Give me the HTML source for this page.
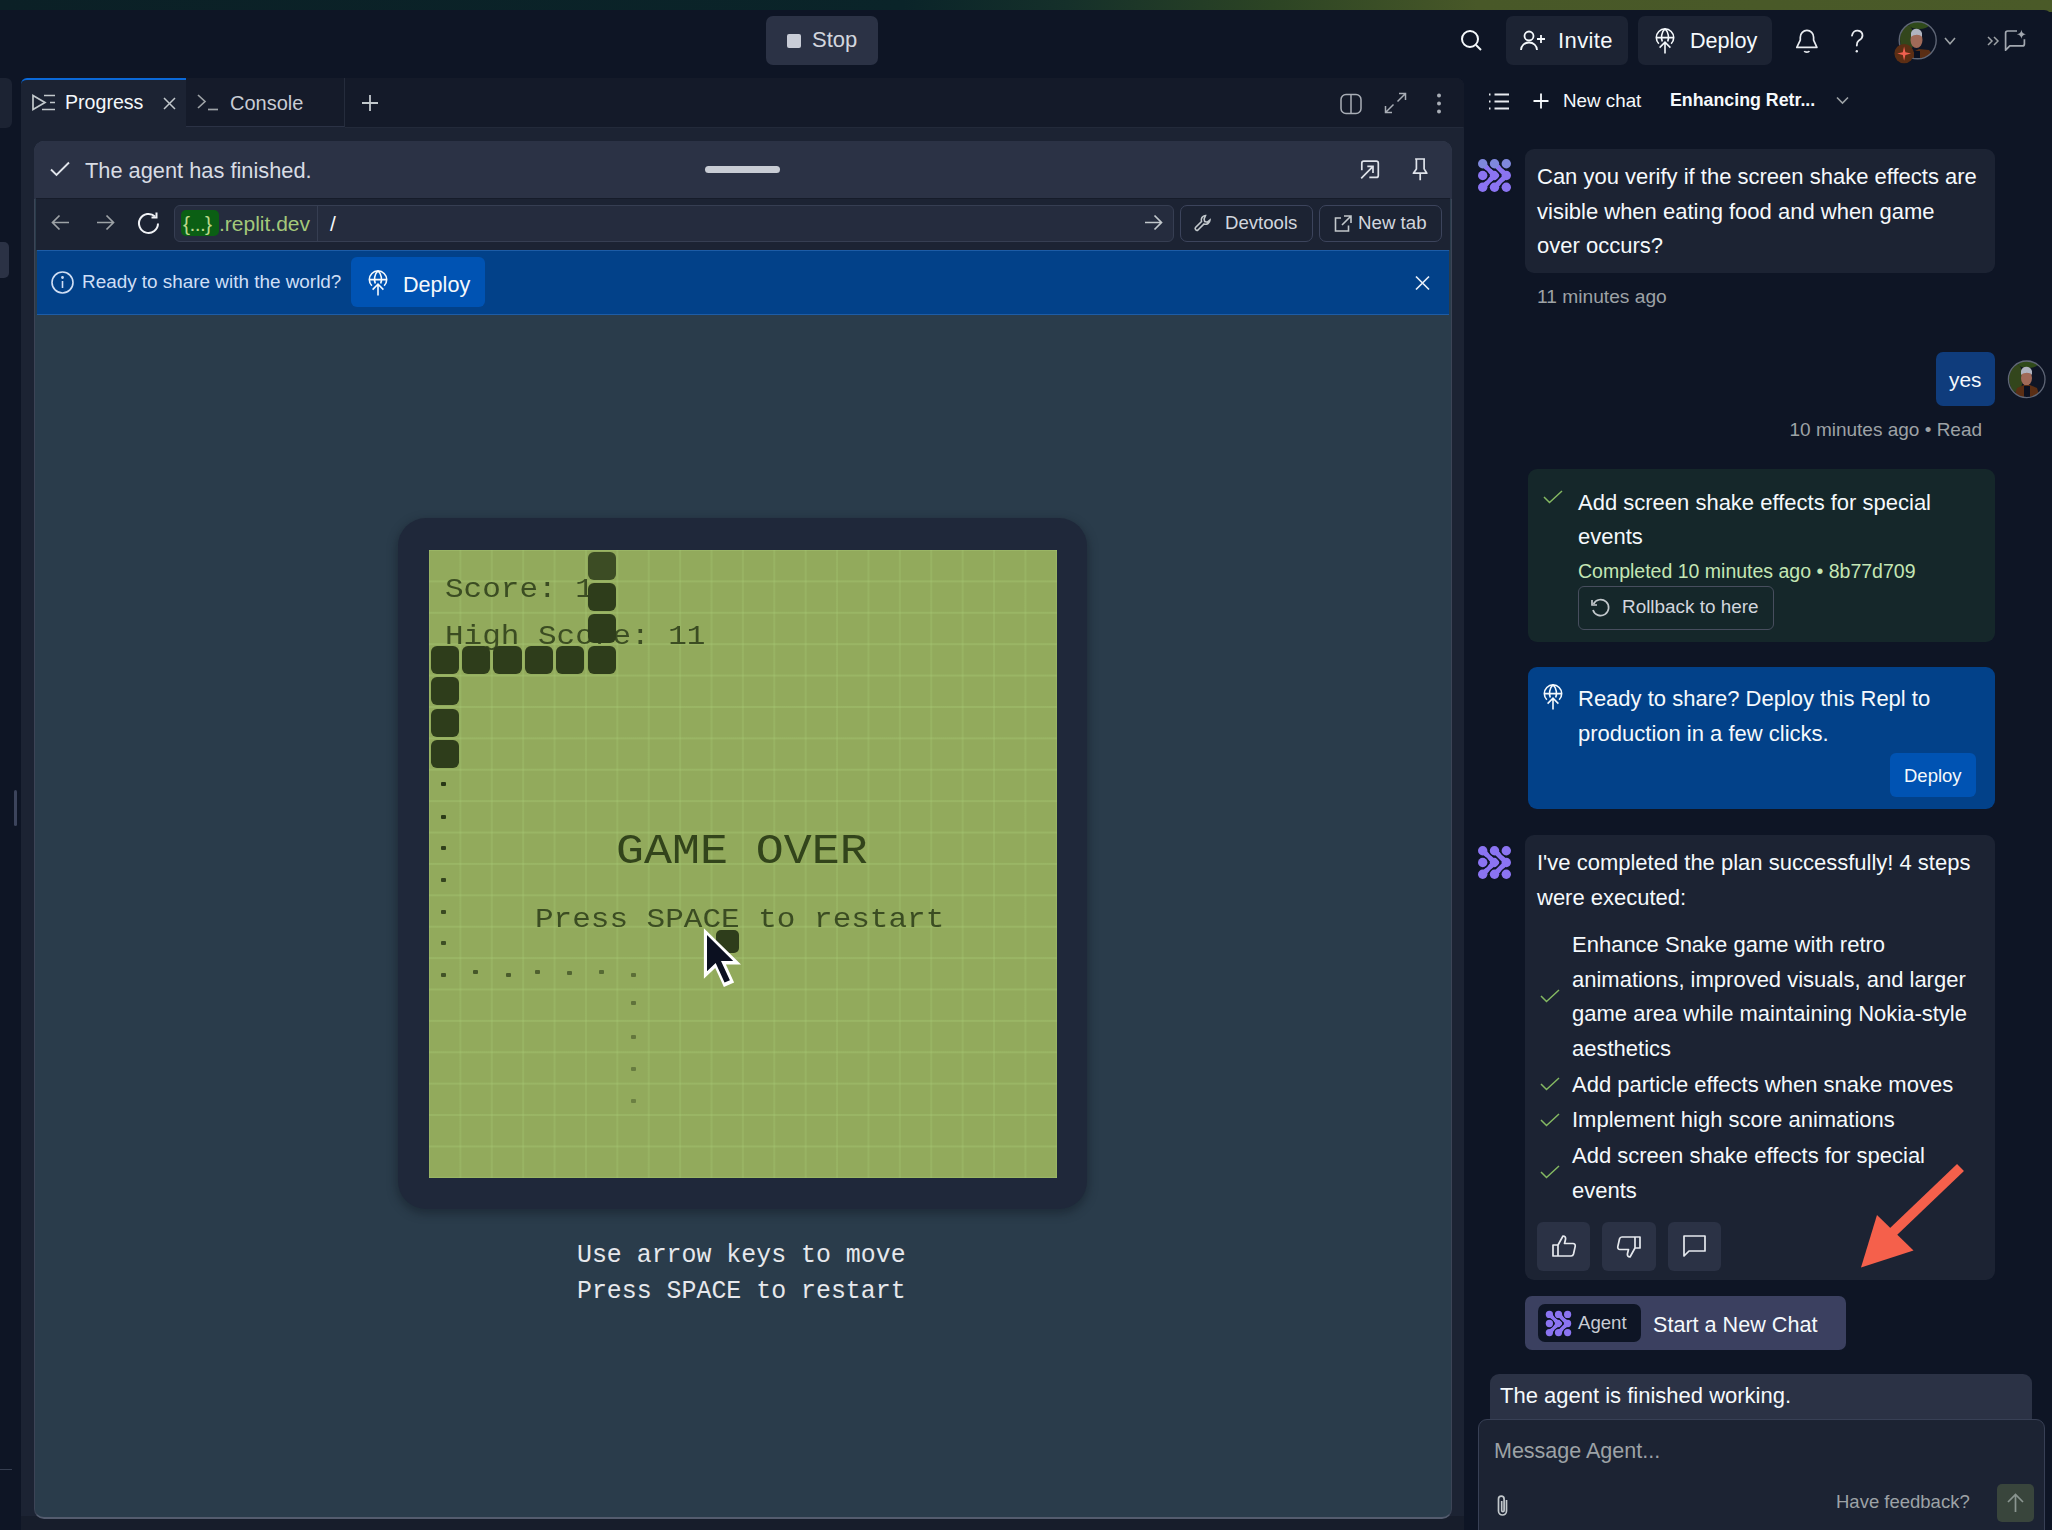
<!DOCTYPE html>
<html><head><meta charset="utf-8">
<style>
*{box-sizing:border-box;margin:0;padding:0}
html,body{width:2052px;height:1530px;overflow:hidden;background:#0e1525;font-family:"Liberation Sans",sans-serif;color:#f5f9fc}
.a{position:absolute}
.t{position:absolute;white-space:nowrap;line-height:1}
svg{position:absolute;overflow:visible}
</style></head><body>
<!-- top strip -->
<div class="a" style="left:0;top:0;width:2052px;height:12px;background:linear-gradient(90deg,#0b2026 0%,#0a2429 44%,#15302a 52%,#2c4424 62%,#485828 72%,#4a5a28 100%)"></div>
<div class="a" style="left:0;top:10px;width:2052px;height:1520px;background:#0e1525;border-top-right-radius:8px"></div>

<!-- TOP BAR -->
<div class="a" style="left:766px;top:16px;width:112px;height:49px;background:#2b3245;border-radius:7px"></div>
<div class="a" style="left:787px;top:34px;width:14px;height:14px;background:#c8ccd6;border-radius:2px"></div>
<div class="t" style="left:812px;top:29px;font-size:22px;color:#d2d6de">Stop</div>

<!-- search -->
<svg style="left:1460px;top:29px" width="24" height="24" viewBox="0 0 24 24" fill="none" stroke="#f5f9fc" stroke-width="2"><circle cx="10" cy="10" r="8"/><path d="M16 16l5 5"/></svg>
<div class="a" style="left:1506px;top:16px;width:122px;height:49px;background:#1c2333;border-radius:7px"></div>
<svg style="left:1520px;top:30px" width="26" height="21" viewBox="0 0 26 21" fill="none" stroke="#f5f9fc" stroke-width="1.8"><circle cx="9" cy="6" r="4.5"/><path d="M1 20c0-4.5 3.6-7.5 8-7.5s8 3 8 7.5"/><path d="M21 5v8M17 9h8"/></svg>
<div class="t" style="left:1558px;top:30px;font-size:22px;letter-spacing:0.4px">Invite</div>
<div class="a" style="left:1638px;top:16px;width:134px;height:49px;background:#1c2333;border-radius:7px"></div>
<svg style="left:1653px;top:28px" width="24" height="26" viewBox="0 0 24 26" fill="none" stroke="#f5f9fc" stroke-width="1.6"><path d="M5.85 15.75A8.7 8.7 0 1 1 18.15 15.75"/><path d="M3.3 9.6H20.7M12 0.9C8.3 4 7.8 10 9.3 13.5M12 0.9C15.7 4 16.2 10 14.7 13.5"/><path d="M12 25.4V14.6M6.6 19.6L12 14.2l5.4 5.4"/></svg>
<div class="t" style="left:1690px;top:30px;font-size:21.6px">Deploy</div>
<!-- bell -->
<svg style="left:1795px;top:28px" width="24" height="26" viewBox="0 0 24 26" fill="none" stroke="#e8ebf0" stroke-width="1.7" stroke-linejoin="round"><path d="M5.3 12.2V9.3A6.65 6.9 0 0 1 18.6 9.3V12.2L21.9 19.4H1.8L5.3 12.2"/><path d="M9.3 23a2.6 1.6 0 0 0 5 0"/></svg>
<svg style="left:1848px;top:28px" width="18" height="26" viewBox="0 0 18 26" fill="none" stroke="#e8ebf0" stroke-width="1.8" stroke-linecap="round"><path d="M4 7.7C4.6 4.2 7.2 2.5 9.7 2.7C12.5 3 14.5 5 14.5 7.6C14.5 10.6 12.5 11.5 10.6 12.8C9.3 13.7 8.8 15 8.8 17.5"/><circle cx="8.8" cy="23.2" r="1.2" fill="#e8ebf0" stroke="none"/></svg>
<!-- avatar -->
<svg style="left:1898px;top:21px" width="40" height="40" viewBox="0 0 40 40"><defs><clipPath id="av1"><circle cx="19.7" cy="19.3" r="18.5"/></clipPath></defs><g clip-path="url(#av1)"><rect width="40" height="40" fill="#0e1525"/><ellipse cx="9" cy="18" rx="7" ry="14" fill="#33461c"/><ellipse cx="21" cy="4" rx="10" ry="4" fill="#2f4a1a"/><ellipse cx="18.5" cy="19" rx="6" ry="8" fill="#a06a58"/><path d="M13 12c1-5 9-6 11 0v4c-2-3-8-3-11 0z" fill="#b0b4c0"/><path d="M15 31l6-3 10 1 6 8v4H12z" fill="#5a2e14"/><rect x="16" y="30" width="6" height="12" fill="#0b1020"/></g><circle cx="19.7" cy="19.3" r="18.5" fill="none" stroke="#5f6676" stroke-width="1.4"/></svg>
<svg style="left:1894px;top:43px" width="21" height="21" viewBox="0 0 21 21"><circle cx="10.1" cy="10.6" r="9.7" fill="#5c2e14"/><path d="M10.1 3.5L11.4 9.3 17 10.6 11.4 11.9 10.1 17.7 8.8 11.9 3.2 10.6 8.8 9.3z" fill="#f06050"/></svg>
<svg style="left:1944px;top:37px" width="12" height="8" viewBox="0 0 12 8" fill="none" stroke="#9da2a6" stroke-width="1.6"><path d="M1 1l5 5.7 5-5.7"/></svg>
<svg style="left:1987px;top:36px" width="12" height="10" viewBox="0 0 12 10" fill="none" stroke="#9da2a6" stroke-width="1.5"><path d="M1 1l4 4-4 4M7 1l4 4-4 4"/></svg>
<svg style="left:2003px;top:28px" width="26" height="26" viewBox="0 0 26 26" fill="none" stroke="#a3a8b0" stroke-width="1.7" stroke-linejoin="round"><path d="M14 3H4.6a2 2 0 0 0-2 2V22.2L6.8 17.9H19.4a2 2 0 0 0 2-2V11.2"/><path d="M18.4 1.8Q18.9 5.8 22.9 6.3Q18.9 6.8 18.4 10.8Q17.9 6.8 13.9 6.3Q17.9 5.8 18.4 1.8Z" fill="#a3a8b0" stroke="none"/></svg>

<!-- left edge remnants -->
<div class="a" style="left:0;top:78px;width:12px;height:50px;background:#1c2333;border-radius:0 6px 6px 0"></div>
<div class="a" style="left:0;top:242px;width:9px;height:36px;background:#2b3245;border-radius:0 5px 5px 0"></div>
<div class="a" style="left:14px;top:790px;width:3px;height:36px;background:#3c445c;border-radius:2px"></div>

<!-- LEFT PANEL -->
<div class="a" style="left:21px;top:78px;width:1443px;height:1452px;background:#1c2333;border-radius:8px 8px 0 0"></div>
<div class="a" style="left:21px;top:78px;width:1443px;height:49px;background:#141a29;border-radius:8px 8px 0 0"></div>
<div class="a" style="left:345px;top:127px;width:1118px;height:1px;background:#232a3a"></div>
<!-- active tab -->
<div class="a" style="left:21px;top:78px;width:165px;height:50px;background:#1c2333;border-radius:6px 0 0 0;border-top:2.5px solid #0b69d8"></div>
<div class="a" style="left:186px;top:78px;width:159px;height:49px;background:#151b2a;border-right:1px solid #252c3c;border-bottom:1px solid #2b3245"></div>
<svg style="left:32px;top:94px" width="24" height="17" viewBox="0 0 24 17" fill="none" stroke="#c2c8cc" stroke-width="1.7"><path d="M1 1.5v14l12-7z"/><path d="M12 1.5h11M18 8.5h5M10 15.5h13"/></svg>
<div class="t" style="left:65px;top:93px;font-size:19.6px;color:#f5f9fc">Progress</div>
<svg style="left:163px;top:97px" width="13" height="13" viewBox="0 0 13 13" fill="none" stroke="#c2c8cc" stroke-width="1.5"><path d="M1 1l11 11M12 1L1 12"/></svg>
<svg style="left:197px;top:94px" width="23" height="17" viewBox="0 0 23 17" fill="none" stroke="#9da2a6" stroke-width="1.7"><path d="M1 1l7 6.5L1 14"/><path d="M11 15.5h10"/></svg>
<div class="t" style="left:230px;top:93px;font-size:20px;color:#c8ccd4">Console</div>
<svg style="left:362px;top:95px" width="16" height="16" viewBox="0 0 16 16" fill="none" stroke="#c2c8cc" stroke-width="1.8"><path d="M8 0v16M0 8h16"/></svg>
<!-- right tab icons -->
<svg style="left:1340px;top:93px" width="22" height="22" viewBox="0 0 22 22" fill="none" stroke="#a9aeb6" stroke-width="1.5"><rect x="1" y="1.5" width="20" height="19" rx="5"/><path d="M11 1.5v19"/></svg>
<svg style="left:1384px;top:92px" width="23" height="22" viewBox="0 0 23 22" fill="none" stroke="#a9aeb6" stroke-width="1.5"><path d="M15 1.5h6.5V8M21.5 1.5l-8 8M8 20.5H1.5V14M1.5 20.5l8-8"/></svg>
<svg style="left:1436px;top:93px" width="6" height="21" viewBox="0 0 6 21" fill="#a9aeb6"><circle cx="3" cy="2.5" r="2"/><circle cx="3" cy="10.5" r="2"/><circle cx="3" cy="18.5" r="2"/></svg>

<!-- WEBVIEW CARD -->
<div class="a" style="left:21px;top:1516px;width:1443px;height:14px;background:#171d2b"></div>
<div class="a" style="left:34px;top:141px;width:1418px;height:1378px;background:#2a3c4b;border-radius:10px;border:1px solid #3c4456;border-bottom:2px solid #545c6e"></div>
<div class="a" style="left:0;top:1469px;width:12px;height:1px;background:#363e50"></div>
<div class="a" style="left:34px;top:141px;width:1418px;height:58px;background:#2b3245;border-radius:10px 10px 0 0"></div>
<svg style="left:50px;top:161px" width="20" height="16" viewBox="0 0 20 16" fill="none" stroke="#e0e4ea" stroke-width="1.9"><path d="M1 8.5l5.5 5.5L19 1.5"/></svg>
<div class="t" style="left:85px;top:160px;font-size:21.8px;color:#d8dce4">The agent has finished.</div>
<div class="a" style="left:705px;top:166px;width:75px;height:7px;background:#c8ccd4;border-radius:4px"></div>
<svg style="left:1358px;top:158px" width="24" height="24" viewBox="0 0 24 24" fill="none" stroke="#dfe3ea" stroke-width="1.7"><path d="M3.8 12.2V5.2a2 2 0 0 1 2-2H18.3a2 2 0 0 1 2 2V17.4a2 2 0 0 1-2 2H11.3"/><path d="M3.2 20.3L15 8.4M9.3 8.4H15V15"/></svg>
<svg style="left:1410px;top:156px" width="20" height="26" viewBox="0 0 20 26" fill="none" stroke="#dfe3ea" stroke-width="1.7" stroke-linejoin="round"><path d="M5.1 3H15M6.4 3V12.9L3.4 17.2H16.8L14.1 12.9V3M10.2 17.2V24.3"/></svg>

<!-- toolbar -->
<div class="a" style="left:36px;top:198px;width:1414px;height:52px;background:#1c2333;border-top:1.5px solid #161c2a"></div>
<svg style="left:51px;top:214px" width="19" height="17" viewBox="0 0 19 17" fill="none" stroke="#9da2a6" stroke-width="1.7"><path d="M18 8.5H1.5M8.5 1.5l-7 7 7 7"/></svg>
<svg style="left:96px;top:214px" width="19" height="17" viewBox="0 0 19 17" fill="none" stroke="#9da2a6" stroke-width="1.7"><path d="M1 8.5h16.5M10.5 1.5l7 7-7 7"/></svg>
<svg style="left:137px;top:212px" width="25" height="23" viewBox="0 0 25 23" fill="none" stroke="#f0f2f6" stroke-width="2"><path d="M21 11.5A9.5 9.5 0 1 1 18 4.5"/><path d="M19.5 0.5v5h-5"/></svg>
<div class="a" style="left:174px;top:205px;width:1000px;height:37px;background:#252c3e;border:1px solid #363e52;border-radius:6px"></div>
<div class="a" style="left:317px;top:206px;width:1px;height:35px;background:#363e52"></div>
<div class="a" style="left:181px;top:210px;width:38px;height:26px;background:#0b5f14;border-radius:5px"></div>
<div class="t" style="left:183px;top:213px;font-size:21px;color:#bcd88a;letter-spacing:-0.6px">{...}</div>
<div class="t" style="left:219px;top:213px;font-size:21px;color:#a4c97a">.replit.dev</div>
<div class="t" style="left:330px;top:213px;font-size:21px;color:#f5f9fc">/</div>
<svg style="left:1144px;top:214px" width="19" height="17" viewBox="0 0 19 17" fill="none" stroke="#c2c8cc" stroke-width="1.7"><path d="M1 8.5h16.5M10.5 1.5l7 7-7 7"/></svg>
<div class="a" style="left:1180px;top:205px;width:133px;height:37px;border:1px solid #3c445c;border-radius:7px"></div>
<svg style="left:1194px;top:214px" width="19" height="18" viewBox="0 0 19 18" fill="none" stroke="#c2c8cc" stroke-width="1.6"><path d="M11.5 1.5a4.5 4.5 0 0 0-4 6L1.5 13.5a1.8 1.8 0 0 0 2.5 2.5l6-6a4.5 4.5 0 0 0 6-4l-2.7 2.2-2.6-.6-.6-2.6z"/></svg>
<div class="t" style="left:1225px;top:214px;font-size:18.6px;color:#d2d6de">Devtools</div>
<div class="a" style="left:1319px;top:205px;width:123px;height:37px;border:1px solid #3c445c;border-radius:7px"></div>
<svg style="left:1334px;top:215px" width="18" height="17" viewBox="0 0 18 17" fill="none" stroke="#c2c8cc" stroke-width="1.6"><path d="M7 3H1.5v13h13v-5.5"/><path d="M10 1h7v7M17 1L8 10"/></svg>
<div class="t" style="left:1358px;top:214px;font-size:18.7px;color:#d2d6de">New tab</div>

<!-- blue banner -->
<div class="a" style="left:37px;top:250px;width:1412px;height:65px;background:#024189;border-top:1.5px solid #1d5ca6;border-bottom:1px solid #1d5ca6"></div>
<svg style="left:51px;top:271px" width="23" height="23" viewBox="0 0 23 23" fill="none" stroke="#d0def4" stroke-width="1.6"><circle cx="11.5" cy="11.5" r="10.5"/><path d="M11.5 10v7"/><circle cx="11.5" cy="6.5" r="0.6" fill="#d0def4"/></svg>
<div class="t" style="left:82px;top:273px;font-size:18.9px;color:#cfdff6">Ready to share with the world?</div>
<div class="a" style="left:351px;top:257px;width:134px;height:50px;background:#0053b3;border-radius:6px"></div>
<svg style="left:365.5px;top:270.4px" width="24" height="26" viewBox="0 0 24 26" fill="none" stroke="#f5f9fc" stroke-width="1.6"><path d="M5.85 15.75A8.7 8.7 0 1 1 18.15 15.75"/><path d="M3.3 9.6H20.7M12 0.9C8.3 4 7.8 10 9.3 13.5M12 0.9C15.7 4 16.2 10 14.7 13.5"/><path d="M12 25.4V14.6M6.6 19.6L12 14.2l5.4 5.4"/></svg>
<div class="t" style="left:403px;top:274px;font-size:21.6px;color:#f5f9fc">Deploy</div>
<svg style="left:1415px;top:276px" width="15" height="14" viewBox="0 0 15 14" fill="none" stroke="#e8eef8" stroke-width="1.7"><path d="M1 0.5l13 13M14 0.5l-13 13"/></svg>

<!-- GAME -->
<div class="a" style="left:396px;top:520px;width:693px;height:694px;border-radius:30px;background:rgba(10,14,24,0.35);filter:blur(5px)"></div>
<div class="a" style="left:398px;top:518px;width:689px;height:691px;border-radius:28px;background:#1f283a"></div>
<div class="a" style="left:429px;top:550px;width:628px;height:628px;background-color:#92aa5c;background-image:linear-gradient(90deg,rgba(168,204,118,0.28) 1.5px,transparent 1.5px),linear-gradient(0deg,rgba(170,206,120,0.32) 1.5px,transparent 1.5px);background-size:31.4px 31.4px;background-position:-1px 1px"></div>
<div class="a" style="left:429px;top:550px;width:628px;height:628px;overflow:hidden">
<div class="t" style="left:16px;top:23.2px;transform:scaleY(0.88);transform-origin:0 76.8%;font-family:'Liberation Mono',monospace;font-size:31px;color:rgba(44,60,24,0.85)">Score: 1</div>
<div class="t" style="left:16px;top:69.7px;transform:scaleY(0.88);transform-origin:0 76.8%;font-family:'Liberation Mono',monospace;font-size:31px;color:rgba(44,60,24,0.85)">High Score: 11</div>
<div class="t" style="left:187px;top:278.1px;transform:scaleY(0.92);transform-origin:0 76.8%;font-family:'Liberation Mono',monospace;font-size:46.6px;color:rgba(40,56,20,0.9)">GAME OVER</div>
<div class="t" style="left:106px;top:352.9px;transform:scaleY(0.88);transform-origin:0 76.8%;font-family:'Liberation Mono',monospace;font-size:31px;color:rgba(44,60,24,0.85)">Press SPACE to restart</div>
</div>
<div class="a" style="left:587.6px;top:551.6px;width:28.2px;height:28.2px;background:#3c4c24;border-radius:6px"></div>
<div class="a" style="left:587.6px;top:583.0px;width:28.2px;height:28.2px;background:#2e3d1b;border-radius:6px"></div>
<div class="a" style="left:587.6px;top:614.4px;width:28.2px;height:28.2px;background:#2e3d1b;border-radius:6px"></div>
<div class="a" style="left:430.6px;top:645.8px;width:28.2px;height:28.2px;background:#2e3d1b;border-radius:6px"></div>
<div class="a" style="left:462.0px;top:645.8px;width:28.2px;height:28.2px;background:#2e3d1b;border-radius:6px"></div>
<div class="a" style="left:493.4px;top:645.8px;width:28.2px;height:28.2px;background:#2e3d1b;border-radius:6px"></div>
<div class="a" style="left:524.8px;top:645.8px;width:28.2px;height:28.2px;background:#2e3d1b;border-radius:6px"></div>
<div class="a" style="left:556.2px;top:645.8px;width:28.2px;height:28.2px;background:#2e3d1b;border-radius:6px"></div>
<div class="a" style="left:587.6px;top:645.8px;width:28.2px;height:28.2px;background:#2e3d1b;border-radius:6px"></div>
<div class="a" style="left:430.6px;top:677.2px;width:28.2px;height:28.2px;background:#2e3d1b;border-radius:6px"></div>
<div class="a" style="left:430.6px;top:708.6px;width:28.2px;height:28.2px;background:#2e3d1b;border-radius:6px"></div>
<div class="a" style="left:430.6px;top:740.0px;width:28.2px;height:28.2px;background:#2e3d1b;border-radius:6px"></div>
<div class="a" style="left:716px;top:930px;width:23px;height:23px;background:#2e3d1b;border-radius:5px"></div>
<div class="a" style="left:441px;top:782px;width:5px;height:4px;background:rgba(40,55,22,1.00);border-radius:1px"></div>
<div class="a" style="left:441px;top:815px;width:5px;height:4px;background:rgba(40,55,22,0.96);border-radius:1px"></div>
<div class="a" style="left:441px;top:846px;width:5px;height:4px;background:rgba(40,55,22,0.92);border-radius:1px"></div>
<div class="a" style="left:441px;top:878px;width:5px;height:4px;background:rgba(40,55,22,0.88);border-radius:1px"></div>
<div class="a" style="left:441px;top:910px;width:5px;height:4px;background:rgba(40,55,22,0.84);border-radius:1px"></div>
<div class="a" style="left:441px;top:941px;width:5px;height:4px;background:rgba(40,55,22,0.80);border-radius:1px"></div>
<div class="a" style="left:441px;top:973px;width:5px;height:4px;background:rgba(40,55,22,0.76);border-radius:1px"></div>
<div class="a" style="left:473px;top:970px;width:5px;height:4px;background:rgba(40,55,22,0.72);border-radius:1px"></div>
<div class="a" style="left:506px;top:973px;width:5px;height:4px;background:rgba(40,55,22,0.68);border-radius:1px"></div>
<div class="a" style="left:535px;top:970px;width:5px;height:4px;background:rgba(40,55,22,0.64);border-radius:1px"></div>
<div class="a" style="left:567px;top:971px;width:5px;height:4px;background:rgba(40,55,22,0.60);border-radius:1px"></div>
<div class="a" style="left:599px;top:970px;width:5px;height:4px;background:rgba(40,55,22,0.56);border-radius:1px"></div>
<div class="a" style="left:631px;top:973px;width:5px;height:4px;background:rgba(40,55,22,0.52);border-radius:1px"></div>
<div class="a" style="left:631px;top:1001px;width:5px;height:4px;background:rgba(40,55,22,0.48);border-radius:1px"></div>
<div class="a" style="left:631px;top:1035px;width:5px;height:4px;background:rgba(40,55,22,0.44);border-radius:1px"></div>
<div class="a" style="left:631px;top:1067px;width:5px;height:4px;background:rgba(40,55,22,0.40);border-radius:1px"></div>
<div class="a" style="left:631px;top:1099px;width:5px;height:4px;background:rgba(40,55,22,0.36);border-radius:1px"></div>
<svg style="left:702px;top:927px" width="40" height="60" viewBox="0 0 17.5 27"><path d="M0.6 0.6V23.3L5.7 18.5 9.6 27 14.2 25 10.5 16.9H17.3Z" fill="#fff"/><path d="M2 3.6V19.9L5.9 16.2 9.9 25 12.3 24 8.3 15.3H13.8Z" fill="#0b1020"/></svg>
<div class="t" style="left:577px;top:1243px;font-family:'Liberation Mono',monospace;font-size:24.9px;color:#e6e8ec">Use arrow keys to move</div>
<div class="t" style="left:577px;top:1279.4px;font-family:'Liberation Mono',monospace;font-size:24.9px;color:#e6e8ec">Press SPACE to restart</div>

<!-- RIGHT PANEL -->
<!-- chat header -->
<svg style="left:1488px;top:93px" width="22" height="17" viewBox="0 0 22 17" fill="none" stroke="#e8ebf0" stroke-width="1.8"><path d="M6.5 1.5H21M6.5 8.5H21M6.5 15.5H21"/><path d="M1 1.5h1.5M1 8.5h1.5M1 15.5h1.5"/></svg>
<svg style="left:1533px;top:93px" width="16" height="16" viewBox="0 0 16 16" fill="none" stroke="#f5f9fc" stroke-width="1.8"><path d="M8 0.5v15M0.5 8h15"/></svg>
<div class="t" style="left:1563px;top:91.5px;font-size:18.8px;color:#f5f9fc">New chat</div>
<div class="t" style="left:1670px;top:92.3px;font-size:17.8px;font-weight:bold;color:#f5f9fc">Enhancing Retr...</div>
<svg style="left:1836px;top:96px" width="13" height="9" viewBox="0 0 13 9" fill="none" stroke="#9da2a6" stroke-width="1.6"><path d="M1 1.5l5.5 5.5 5.5-5.5"/></svg>

<!-- message 1 -->
<svg style="left:1477px;top:158px" width="35" height="35" viewBox="0 0 35 35"><path d="M5.7 5.7L17.5 17.5 5.7 29.3" stroke="#8b74f2" stroke-width="5.2" fill="none" stroke-linejoin="round"/><circle cx="5.7" cy="5.7" r="4.7" fill="#7f88dc"/><circle cx="17.5" cy="17.5" r="4.7" fill="#8b74f2"/><circle cx="5.7" cy="29.3" r="4.7" fill="#8b74f2"/><path d="M17.5 5.7L29.3 17.5 17.5 29.3" stroke="#0e1525" stroke-width="8.2" fill="none" stroke-linejoin="round"/><circle cx="17.5" cy="5.7" r="6.2" fill="#0e1525"/><circle cx="29.3" cy="17.5" r="6.2" fill="#0e1525"/><circle cx="17.5" cy="29.3" r="6.2" fill="#0e1525"/><path d="M17.5 5.7L29.3 17.5 17.5 29.3" stroke="#8b74f2" stroke-width="5.2" fill="none" stroke-linejoin="round"/><circle cx="17.5" cy="5.7" r="4.7" fill="#7f88dc"/><circle cx="29.3" cy="17.5" r="4.7" fill="#8b74f2"/><circle cx="17.5" cy="29.3" r="4.7" fill="#8b74f2"/><circle cx="5.7" cy="17.5" r="6.2" fill="#0e1525"/><circle cx="5.7" cy="17.5" r="4.7" fill="#8b74f2"/><circle cx="29.3" cy="5.7" r="6.2" fill="#0e1525"/><circle cx="29.3" cy="5.7" r="4.7" fill="#7f88dc"/><circle cx="29.3" cy="29.3" r="6.2" fill="#0e1525"/><circle cx="29.3" cy="29.3" r="4.7" fill="#8b74f2"/></svg>
<div class="a" style="left:1525px;top:149px;width:470px;height:124px;background:#1c2333;border-radius:9px"></div>
<div class="t" style="left:1537px;top:165.6px;font-size:22px;color:#f5f9fc">Can you verify if the screen shake effects are</div>
<div class="t" style="left:1537px;top:200.8px;font-size:22px;color:#f5f9fc">visible when eating food and when game</div>
<div class="t" style="left:1537px;top:235.4px;font-size:22px;color:#f5f9fc">over occurs?</div>
<div class="t" style="left:1537px;top:286.7px;font-size:19.2px;color:#9da2a6">11 minutes ago</div>

<!-- yes -->
<div class="a" style="left:1936px;top:352px;width:59px;height:54px;background:#0f3c7c;border-radius:7px"></div>
<div class="t" style="left:1949px;top:369.5px;font-size:20.9px;color:#f5f9fc">yes</div>
<svg style="left:2007px;top:360px" width="40" height="40" viewBox="0 0 40 40"><defs><clipPath id="av2"><circle cx="19.7" cy="19.3" r="18.3"/></clipPath></defs><g clip-path="url(#av2)"><rect width="40" height="40" fill="#0e1525"/><ellipse cx="9" cy="18" rx="7" ry="14" fill="#33461c"/><ellipse cx="21" cy="4" rx="10" ry="4" fill="#2f4a1a"/><ellipse cx="19.5" cy="18" rx="5.5" ry="7.5" fill="#a06a58"/><path d="M14 11c1-5 9-6 11 0v4c-2-3-8-3-11 0z" fill="#b0b4c0"/><path d="M7 38l3-10 7-3h6l7 3 3 10z" fill="#5a2e14"/><rect x="17" y="26" width="6" height="14" fill="#0b1020"/></g><circle cx="19.7" cy="19.3" r="18.3" fill="none" stroke="#5f6676" stroke-width="1.3"/></svg>
<div class="t" style="left:1789.5px;top:419.7px;font-size:19px;color:#9da2a6">10 minutes ago • Read</div>

<!-- checkpoint card -->
<div class="a" style="left:1528px;top:469px;width:467px;height:173px;background:#15272a;border-radius:9px"></div>
<svg style="left:1543px;top:490px" width="20" height="14" viewBox="0 0 20 14" fill="none" stroke="#84b862" stroke-width="1.5"><path d="M1 7l5.5 5.5L19 1"/></svg>
<div class="t" style="left:1578px;top:491.9px;font-size:22px;color:#f5f9fc">Add screen shake effects for special</div>
<div class="t" style="left:1578px;top:526.4px;font-size:22px;color:#f5f9fc">events</div>
<div class="t" style="left:1578px;top:561.8px;font-size:19.5px;color:#c4e6b4">Completed 10 minutes ago • 8b77d709</div>
<div class="a" style="left:1578px;top:586px;width:196px;height:44px;border:1.5px solid #474e5e;border-radius:6px"></div>
<svg style="left:1590px;top:599px" width="20" height="18" viewBox="0 0 20 18" fill="none" stroke="#c2c8cc" stroke-width="1.7"><path d="M3.5 5A8 8 0 1 1 3 11"/><path d="M2 1v5h5"/></svg>
<div class="t" style="left:1622px;top:598.4px;font-size:18.9px;color:#d2d6de">Rollback to here</div>

<!-- deploy card -->
<div class="a" style="left:1528px;top:667px;width:467px;height:142px;background:#024189;border-radius:9px"></div>
<svg style="left:1541px;top:684.4px" width="24" height="26" viewBox="0 0 24 26" fill="none" stroke="#f5f9fc" stroke-width="1.6"><path d="M5.85 15.75A8.7 8.7 0 1 1 18.15 15.75"/><path d="M3.3 9.6H20.7M12 0.9C8.3 4 7.8 10 9.3 13.5M12 0.9C15.7 4 16.2 10 14.7 13.5"/><path d="M12 25.4V14.6M6.6 19.6L12 14.2l5.4 5.4"/></svg>
<div class="t" style="left:1578px;top:688.4px;font-size:22px;color:#f5f9fc">Ready to share? Deploy this Repl to</div>
<div class="t" style="left:1578px;top:723px;font-size:22px;color:#f5f9fc">production in a few clicks.</div>
<div class="a" style="left:1890px;top:753px;width:86px;height:44px;background:#0053b3;border-radius:6px"></div>
<div class="t" style="left:1904px;top:766.9px;font-size:18.5px;color:#f5f9fc">Deploy</div>

<!-- big message -->
<svg style="left:1477px;top:845px" width="35" height="35" viewBox="0 0 35 35"><path d="M5.7 5.7L17.5 17.5 5.7 29.3" stroke="#8b74f2" stroke-width="5.2" fill="none" stroke-linejoin="round"/><circle cx="5.7" cy="5.7" r="4.7" fill="#8b74f2"/><circle cx="17.5" cy="17.5" r="4.7" fill="#8b74f2"/><circle cx="5.7" cy="29.3" r="4.7" fill="#8b74f2"/><path d="M17.5 5.7L29.3 17.5 17.5 29.3" stroke="#0e1525" stroke-width="8.2" fill="none" stroke-linejoin="round"/><circle cx="17.5" cy="5.7" r="6.2" fill="#0e1525"/><circle cx="29.3" cy="17.5" r="6.2" fill="#0e1525"/><circle cx="17.5" cy="29.3" r="6.2" fill="#0e1525"/><path d="M17.5 5.7L29.3 17.5 17.5 29.3" stroke="#8b74f2" stroke-width="5.2" fill="none" stroke-linejoin="round"/><circle cx="17.5" cy="5.7" r="4.7" fill="#8b74f2"/><circle cx="29.3" cy="17.5" r="4.7" fill="#8b74f2"/><circle cx="17.5" cy="29.3" r="4.7" fill="#8b74f2"/><circle cx="5.7" cy="17.5" r="6.2" fill="#0e1525"/><circle cx="5.7" cy="17.5" r="4.7" fill="#8b74f2"/><circle cx="29.3" cy="5.7" r="6.2" fill="#0e1525"/><circle cx="29.3" cy="5.7" r="4.7" fill="#8b74f2"/><circle cx="29.3" cy="29.3" r="6.2" fill="#0e1525"/><circle cx="29.3" cy="29.3" r="4.7" fill="#8b74f2"/></svg>
<div class="a" style="left:1525px;top:835px;width:470px;height:445px;background:#1c2333;border-radius:9px"></div>
<div class="t" style="left:1537px;top:851.9px;font-size:22px;color:#f5f9fc">I've completed the plan successfully! 4 steps</div>
<div class="t" style="left:1537px;top:886.5px;font-size:22px;color:#f5f9fc">were executed:</div>
<svg style="left:1540px;top:989px" width="20" height="14" viewBox="0 0 20 14" fill="none" stroke="#84b862" stroke-width="1.5"><path d="M1 7l5.5 5.5L19 1"/></svg>
<div class="t" style="left:1572px;top:934.1px;font-size:22px;color:#f5f9fc">Enhance Snake game with retro</div>
<div class="t" style="left:1572px;top:968.8px;font-size:22px;color:#f5f9fc">animations, improved visuals, and larger</div>
<div class="t" style="left:1572px;top:1003.4px;font-size:22px;color:#f5f9fc">game area while maintaining Nokia-style</div>
<div class="t" style="left:1572px;top:1038.4px;font-size:22px;color:#f5f9fc">aesthetics</div>
<svg style="left:1540px;top:1077px" width="20" height="14" viewBox="0 0 20 14" fill="none" stroke="#84b862" stroke-width="1.5"><path d="M1 7l5.5 5.5L19 1"/></svg>
<div class="t" style="left:1572px;top:1074px;font-size:22px;color:#f5f9fc">Add particle effects when snake moves</div>
<svg style="left:1540px;top:1113px" width="20" height="14" viewBox="0 0 20 14" fill="none" stroke="#84b862" stroke-width="1.5"><path d="M1 7l5.5 5.5L19 1"/></svg>
<div class="t" style="left:1572px;top:1109.4px;font-size:22px;color:#f5f9fc">Implement high score animations</div>
<svg style="left:1540px;top:1165px" width="20" height="14" viewBox="0 0 20 14" fill="none" stroke="#84b862" stroke-width="1.5"><path d="M1 7l5.5 5.5L19 1"/></svg>
<div class="t" style="left:1572px;top:1145.4px;font-size:22px;color:#f5f9fc">Add screen shake effects for special</div>
<div class="t" style="left:1572px;top:1180.4px;font-size:22px;color:#f5f9fc">events</div>
<!-- feedback buttons -->
<div class="a" style="left:1537px;top:1222px;width:53px;height:49px;background:#2b3245;border-radius:6px"></div>
<div class="a" style="left:1602px;top:1222px;width:54px;height:49px;background:#2b3245;border-radius:6px"></div>
<div class="a" style="left:1668px;top:1222px;width:53px;height:49px;background:#2b3245;border-radius:6px"></div>
<svg style="left:1552px;top:1235px" width="24" height="22" viewBox="0 0 24 22" fill="none" stroke="#e6e9ee" stroke-width="1.7" stroke-linejoin="round"><path d="M1 10h5v11H1zM6 10l5-9c2 0 3 1.5 2.5 3.5L12.5 8.5H21c1.5 0 2.5 1.3 2.2 2.8L21.5 19c-.3 1.2-1.2 2-2.4 2H6"/></svg>
<svg style="left:1617px;top:1236px" width="24" height="22" viewBox="0 0 24 22" fill="none" stroke="#e6e9ee" stroke-width="1.7" stroke-linejoin="round"><path d="M23 12h-5V1h5zM18 12l-5 9c-2 0-3-1.5-2.5-3.5l1-4H3c-1.5 0-2.5-1.3-2.2-2.8L2.5 3C2.8 1.8 3.7 1 4.9 1H18"/></svg>
<svg style="left:1683px;top:1235px" width="23" height="22" viewBox="0 0 23 22" fill="none" stroke="#e6e9ee" stroke-width="1.7" stroke-linejoin="round"><path d="M1 1h21v15H6l-5 5z"/></svg>

<!-- red arrow -->
<svg style="left:1855px;top:1160px" width="112" height="112" viewBox="0 0 112 112"><path d="M105.5 7.5L38 72" stroke="#f5604b" stroke-width="10" stroke-linecap="butt"/><path d="M6 107.5L22 55 58.5 90.5z" fill="#f5604b"/></svg>

<!-- start new chat -->
<div class="a" style="left:1525px;top:1296px;width:321px;height:54px;background:#3b4060;border-radius:7px"></div>
<div class="a" style="left:1538px;top:1304px;width:103px;height:38px;background:#0e1525;border-radius:7px"></div>
<svg style="left:1545px;top:1310px" width="27" height="27" viewBox="0 0 35 35"><path d="M5.7 5.7L17.5 17.5 5.7 29.3" stroke="#8b74f2" stroke-width="5.2" fill="none" stroke-linejoin="round"/><circle cx="5.7" cy="5.7" r="4.7" fill="#8b74f2"/><circle cx="17.5" cy="17.5" r="4.7" fill="#8b74f2"/><circle cx="5.7" cy="29.3" r="4.7" fill="#8b74f2"/><path d="M17.5 5.7L29.3 17.5 17.5 29.3" stroke="#0e1525" stroke-width="8.2" fill="none" stroke-linejoin="round"/><circle cx="17.5" cy="5.7" r="6.2" fill="#0e1525"/><circle cx="29.3" cy="17.5" r="6.2" fill="#0e1525"/><circle cx="17.5" cy="29.3" r="6.2" fill="#0e1525"/><path d="M17.5 5.7L29.3 17.5 17.5 29.3" stroke="#8b74f2" stroke-width="5.2" fill="none" stroke-linejoin="round"/><circle cx="17.5" cy="5.7" r="4.7" fill="#8b74f2"/><circle cx="29.3" cy="17.5" r="4.7" fill="#8b74f2"/><circle cx="17.5" cy="29.3" r="4.7" fill="#8b74f2"/><circle cx="5.7" cy="17.5" r="6.2" fill="#0e1525"/><circle cx="5.7" cy="17.5" r="4.7" fill="#8b74f2"/><circle cx="29.3" cy="5.7" r="6.2" fill="#0e1525"/><circle cx="29.3" cy="5.7" r="4.7" fill="#8b74f2"/><circle cx="29.3" cy="29.3" r="6.2" fill="#0e1525"/><circle cx="29.3" cy="29.3" r="4.7" fill="#8b74f2"/></svg>
<div class="t" style="left:1578px;top:1313.8px;font-size:18.6px;color:#c8ccd4">Agent</div>
<div class="t" style="left:1653px;top:1313.5px;font-size:21.6px;color:#f5f9fc">Start a New Chat</div>

<!-- finished working bar -->
<div class="a" style="left:1490px;top:1374px;width:542px;height:50px;background:#2b3245;border-radius:9px 9px 0 0"></div>
<div class="t" style="left:1500px;top:1385.4px;font-size:22px;color:#f5f9fc">The agent is finished working.</div>
<!-- input -->
<div class="a" style="left:1478px;top:1419px;width:567px;height:130px;background:#1c2333;border:1.5px solid #384055;border-radius:9px"></div>
<div class="t" style="left:1494px;top:1441px;font-size:21.5px;color:#9da2a6">Message Agent...</div>
<svg style="left:1494px;top:1494px" width="18" height="24" viewBox="0 0 18 24" fill="none" stroke="#c2c8cc" stroke-width="1.7"><path d="M12.5 6v11a4 4 0 0 1-8 0V5a2.8 2.8 0 0 1 5.6 0v11.5a1.2 1.2 0 0 1-2.4 0V7"/></svg>
<div class="t" style="left:1836px;top:1493.3px;font-size:18.5px;color:#9da2a6">Have feedback?</div>
<div class="a" style="left:1997px;top:1484px;width:37px;height:38px;background:#39453c;border-radius:5px"></div>
<svg style="left:2006px;top:1493px" width="19" height="20" viewBox="0 0 19 20" fill="none" stroke="#8a9590" stroke-width="1.7"><path d="M9.5 19V2M2 9l7.5-7.5L17 9"/></svg>

</body></html>
